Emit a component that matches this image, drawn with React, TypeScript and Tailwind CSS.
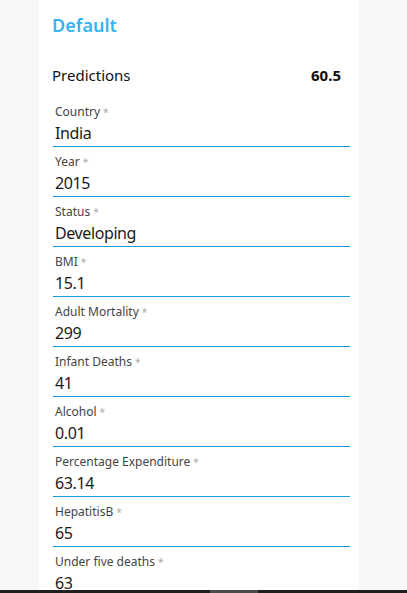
const fields = [
  { label: 'Country', value: 'India' },
  { label: 'Year', value: '2015' },
  { label: 'Status', value: 'Developing' },
  { label: 'BMI', value: '15.1' },
  { label: 'Adult Mortality', value: '299' },
  { label: 'Infant Deaths', value: '41' },
  { label: 'Alcohol', value: '0.01' },
  { label: 'Percentage Expenditure', value: '63.14' },
  { label: 'HepatitisB', value: '65' },
  { label: 'Under five deaths', value: '63' },
]

function Field({ label, value }: { label: string; value: string }) {
  return (
    <div className="h-[50px] shrink-0 pt-[7px] pb-[5px] pl-[1px]">
      <div className="ml-[2px] text-[12px] leading-[16px] text-[#444]">
        {label}
        <span className="ml-[3px] text-[10px] text-[#aaa]">*</span>
      </div>
      <div className="ml-[2px] pt-[3px] text-[16px] leading-[20px] tracking-[-0.4px] text-[#1a1a1a]">{value}</div>
      <div className="mt-[3px] h-px bg-[#1b9ad6]" />
    </div>
  )
}

export default function App() {
  return (
    <div className="flex h-screen flex-col bg-[#f8f8f8] font-['Noto_Sans',sans-serif]">
      <div className="flex-1 overflow-hidden">
        <div className="ml-[39px] h-full w-[320px] bg-white pl-[13px] pr-[9px]">
          <h1 className="pt-[13px] text-[18px] font-semibold leading-[24px] text-[#35b3f3]">Default</h1>
          <div className="mt-[28px] flex items-center justify-between pr-[9px] text-[15px] leading-[20px] text-[#111]">
            <span>Predictions</span>
            <span className="font-bold">60.5</span>
          </div>
          <div className="mt-[12px] flex flex-col">
            {fields.map((f) => (
              <Field key={f.label} label={f.label} value={f.value} />
            ))}
          </div>
        </div>
      </div>
      <div className="flex h-[3px] shrink-0 bg-[#1f1f1f]">
        <div className="ml-[210px] w-[48px] bg-[#4a4a4a]" />
      </div>
    </div>
  )
}
